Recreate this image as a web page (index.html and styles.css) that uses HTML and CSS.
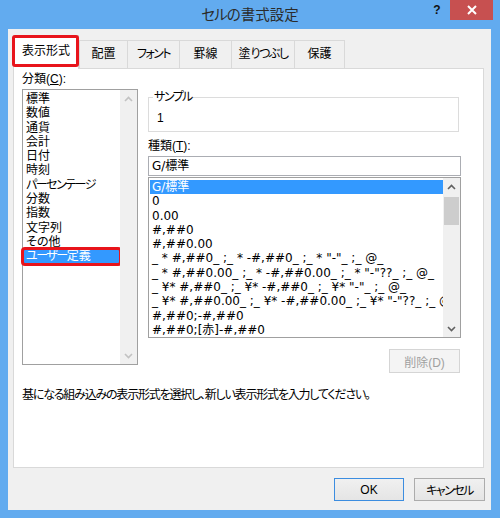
FILE: index.html
```html
<!DOCTYPE html>
<html lang="ja">
<head>
<meta charset="utf-8">
<title>セルの書式設定</title>
<link rel="stylesheet" href="styles.css">
</head>
<body>
<div class="window">
  <div class="titlebar">
    <div class="tb-spacer"></div>
    <div class="title"><span class="kana">セル</span>の書式設定</div>
    <div class="controls">
      <span class="help">?</span>
      <span class="close"><svg width="10" height="10" viewBox="0 0 10 10"><path d="M1 1L9 9M9 1L1 9" stroke="#fff" stroke-width="2"/></svg></span>
    </div>
  </div>
  <div class="client">
    <div class="tabs">
      <div class="tab selected">表示形式</div>
      <div class="tab t2">配置</div>
      <div class="tab t3"><span class="kana">フォント</span></div>
      <div class="tab t4">罫線</div>
      <div class="tab t5">塗<span class="kana">りつぶし</span></div>
      <div class="tab t6">保護</div>
    </div>
    <div class="panel">
      <div class="cols">
        <div class="left">
          <div class="label">分類(<u>C</u>):</div>
          <div class="listbox cat">
            <div class="items">
              <div class="item">標準</div>
              <div class="item">数値</div>
              <div class="item">通貨</div>
              <div class="item">会計</div>
              <div class="item">日付</div>
              <div class="item">時刻</div>
              <div class="item"><span class="kana">パーセンテージ</span></div>
              <div class="item">分数</div>
              <div class="item">指数</div>
              <div class="item">文字列</div>
              <div class="item">その他</div>
              <div class="item sel marked"><span class="kana">ユーザー</span>定義</div>
            </div>
            <div class="vscroll disabled">
              <div class="arrow"><svg width="9" height="6" viewBox="0 0 9 6"><path d="M1 5L4.5 1.5L8 5" fill="none" stroke="currentColor" stroke-width="1.6"/></svg></div>
              <div class="track"></div>
              <div class="arrow"><svg width="9" height="6" viewBox="0 0 9 6"><path d="M1 1L4.5 4.5L8 1" fill="none" stroke="currentColor" stroke-width="1.6"/></svg></div>
            </div>
          </div>
        </div>
        <div class="right">
          <fieldset class="sample">
            <legend><span class="kana">サンプル</span></legend>
            <div class="sample-value">1</div>
          </fieldset>
          <div class="label kind">種類(<u>T</u>):</div>
          <div class="input">G/標準</div>
          <div class="listbox fmt">
            <div class="items">
              <div class="item sel">G/標準</div>
              <div class="item">0</div>
              <div class="item">0.00</div>
              <div class="item">#,##0</div>
              <div class="item">#,##0.00</div>
              <div class="item">_ * #,##0_ ;_ * -#,##0_ ;_ * "-"_ ;_ @_</div>
              <div class="item">_ * #,##0.00_ ;_ * -#,##0.00_ ;_ * "-"??_ ;_ @_</div>
              <div class="item">_ ¥* #,##0_ ;_ ¥* -#,##0_ ;_ ¥* "-"_ ;_ @_</div>
              <div class="item">_ ¥* #,##0.00_ ;_ ¥* -#,##0.00_ ;_ ¥* "-"??_ ;_ @_</div>
              <div class="item">#,##0;-#,##0</div>
              <div class="item">#,##0;[赤]-#,##0</div>
            </div>
            <div class="vscroll">
              <div class="arrow"><svg width="9" height="6" viewBox="0 0 9 6"><path d="M1 5L4.5 1.5L8 5" fill="none" stroke="currentColor" stroke-width="1.6"/></svg></div>
              <div class="track"><div class="thumb"></div></div>
              <div class="arrow"><svg width="9" height="6" viewBox="0 0 9 6"><path d="M1 1L4.5 4.5L8 1" fill="none" stroke="currentColor" stroke-width="1.6"/></svg></div>
            </div>
          </div>
          <div class="del-row"><button class="btn disabled-btn">削除(D)</button></div>
        </div>
      </div>
      <p class="desc">基になる組み込みの表示形式を選択し、新しい表示形式を入力してください。</p>
    </div>
    <div class="buttons">
      <button class="btn default">OK</button>
      <button class="btn cancel"><span class="kana">キャンセル</span></button>
    </div>
  </div>
</div>
</body>
</html>
```
FILE: styles.css
```css
* { box-sizing: border-box; }

body {
  margin: 0;
  background: #62abef;
  font-family: "Liberation Sans", "Noto Sans CJK JP", sans-serif;
  font-size: 12px;
  color: #000;
  font-feature-settings: "palt";
}

.kana {
  letter-spacing: -1.5px;
}

.window {
  width: 500px;
  height: 518px;
  display: flex;
  flex-direction: column;
  background: #62abef;
}

.titlebar {
  height: 29px;
  display: grid;
  grid-template-columns: 1fr auto 1fr;
}

.title {
  font-size: 14.5px;
  line-height: 29px;
  color: #2b2b2b;
  padding-top: 1px;
}

.title .kana {
  letter-spacing: -1px;
}

.controls {
  justify-self: end;
  display: flex;
  align-items: flex-start;
  margin-right: 7px;
}

.help {
  width: 26px;
  height: 20px;
  line-height: 20px;
  text-align: center;
  font-family: "Liberation Sans", sans-serif;
  font-weight: bold;
  font-size: 12px;
  color: #111;
}

.close {
  width: 43px;
  height: 20px;
  background: #c75050;
  display: flex;
  align-items: center;
  justify-content: center;
}

.client {
  margin: 0 9px 0 8px;
  height: 481px;
  background: #f0f0f0;
  padding: 6px 7px 0 5px;
  display: flex;
  flex-direction: column;
}

.tabs {
  display: flex;
  align-items: flex-end;
  height: 33px;
  position: relative;
  z-index: 1;
}

.tab {
  height: 28px;
  border: 1px solid #d9d9d9;
  border-bottom: none;
  background: #f0f0f0;
  text-align: center;
  line-height: 14px;
  padding-top: 6px;
  margin-left: -1px;
}

.tab.selected {
  width: 66px;
  height: 34px;
  margin-left: 0;
  margin-bottom: -1px;
  background: #fff;
  border-color: #d9d9d9;
  padding-top: 8px;
  position: relative;
}

.tab.selected::after {
  content: "";
  position: absolute;
  left: -2px;
  top: -1px;
  right: -1px;
  height: 26px;
  border: 3px solid #e8141b;
  border-radius: 3px;
}

.tab.t2 { width: 49px; margin-left: 0; }
.tab.t3 { width: 53px; }
.tab.t4 { width: 53px; }
.tab.t5 { width: 64px; }
.tab.t6 { width: 51px; }

.panel {
  height: 400px;
  background: #fff;
  border: 1px solid #d9d9d9;
  padding: 3px 22px 0 8px;
}

.cols {
  display: grid;
  grid-template-columns: 116px 313px;
  column-gap: 10px;
  height: 301px;
}

.label {
  line-height: 14px;
  height: 14px;
}

.listbox {
  border: 1px solid #a0a0a0;
  display: flex;
  background: #fff;
}

.listbox.cat {
  margin-top: 3px;
  height: 276px;
}

.items {
  flex: 1;
  padding-top: 2px;
  min-width: 0;
}

.item {
  height: 14.3px;
  line-height: 14.3px;
  padding-left: 3px;
  white-space: nowrap;
}

.item.sel {
  background: #3399ff;
  color: #fff;
}

.item.marked {
  outline: 3px solid #e8141b;
  outline-offset: -1px;
  border-radius: 2px;
}

.vscroll {
  width: 17px;
  background: #f0f0f0;
  display: flex;
  flex-direction: column;
  color: #606060;
}

.vscroll.disabled {
  color: #c2c2c2;
}

.arrow {
  height: 17px;
  display: flex;
  align-items: center;
  justify-content: center;
}

.track {
  flex: 1;
  padding: 2px 1px 0;
}

.thumb {
  height: 28px;
  background: #cdcdcd;
}

.right {
  display: flex;
  flex-direction: column;
}

.sample {
  margin: 18px 2px 0 0;
  border: 1px solid #dcdcdc;
  padding: 0 4px 6px 4px;
  min-width: 0;
}

.sample legend {
  padding: 0 1px;
  line-height: 14px;
}

.sample-value {
  padding: 7px 0 0 4px;
  line-height: 14px;
}

.label.kind {
  margin-top: 7px;
}

.input {
  margin-top: 3px;
  height: 20px;
  border: 1px solid #abadb3;
  padding-left: 3px;
  line-height: 18px;
  font-family: "DejaVu Sans", "Noto Sans CJK JP", sans-serif;
}

.listbox.fmt {
  margin-top: 1px;
  height: 161px;
}

.listbox.fmt .items {
  overflow: hidden;
  padding-left: 1px;
  font-family: "DejaVu Sans", "Noto Sans CJK JP", sans-serif;
}

.listbox.fmt .item {
  padding-left: 2px;
}

.del-row {
  display: flex;
  justify-content: flex-end;
  margin-top: 11px;
  padding-right: 1px;
}

.btn {
  font: inherit;
  font-feature-settings: "palt";
  height: 24px;
  border: 1px solid #acacac;
  background: linear-gradient(#f0f0f0, #e5e5e5);
  color: #000;
  padding: 0;
}

.disabled-btn {
  width: 71px;
  background: #f4f4f4;
  border-color: #d5d5d5;
  color: #a0a0a0;
}

.desc {
  margin: 15px 0 0 0;
  line-height: 14px;
  letter-spacing: -1.2px;
}

.buttons {
  display: flex;
  justify-content: flex-end;
  gap: 10px;
  margin-top: 10px;
  margin-right: -1px;
}

.buttons .btn {
  height: 23px;
}

.default {
  width: 70px;
  border-color: #3c8de0;
}

.cancel {
  width: 71px;
}
```
